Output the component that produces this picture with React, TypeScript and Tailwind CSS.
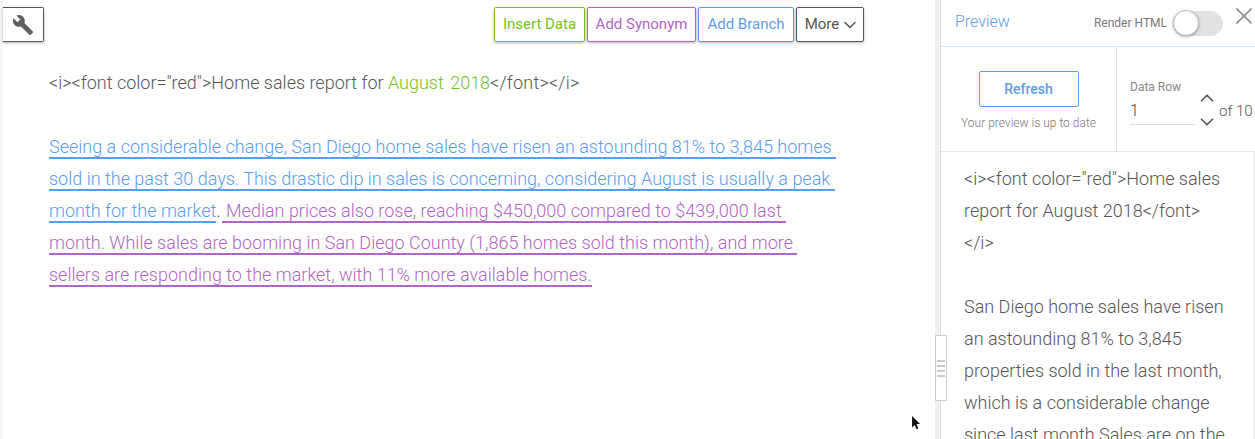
import { ChevronDown, ChevronUp, X } from "lucide-react";

const font = { fontFamily: "Roboto, sans-serif" };

const blueLines = [
  "Seeing a considerable change, San Diego home sales have risen an astounding 81% to 3,845 homes ",
  "sold in the past 30 days. This drastic dip in sales is concerning, considering August is usually a peak ",
];

const purpleLines = [
  "month. While sales are booming in San Diego County (1,865 homes sold this month), and more ",
  "sellers are responding to the market, with 11% more available homes.",
];

function ToolButton({ label, className }: { label: string; className: string }) {
  return (
    <button
      type="button"
      className={`flex h-[35px] items-center justify-center rounded-[2px] border bg-white text-[15px] font-normal shadow-[0_1px_3px_rgba(0,0,0,0.3)] ${className}`}
    >
      {label}
    </button>
  );
}

function Editor() {
  return (
    <main className="flex h-full w-[935px] shrink-0 flex-col border-l-[3px] border-[#f3f5f8] bg-white">
      <div className="flex h-[50px] shrink-0 items-start justify-between pt-[7px] pr-[71px]">
        <button
          type="button"
          className="flex h-[35px] w-[41px] items-center justify-center rounded-r-[2px] border border-l-0 border-[#555] bg-white shadow-[0_1px_3px_rgba(0,0,0,0.3)]"
        >
          <svg viewBox="0 0 24 24" className="h-[22px] w-[22px] fill-[#5f5f5f]">
            <path d="M22.7 19l-9.1-9.1c.9-2.3.4-5-1.5-6.9-2-2-5-2.4-7.4-1.3L9 6 6 9 1.6 4.7C.4 7.1.9 10.1 2.9 12.1c1.9 1.9 4.6 2.4 6.9 1.5l9.1 9.1c.4.4 1 .4 1.4 0l2.3-2.3c.5-.4.5-1.1.1-1.4z" />
          </svg>
        </button>
        <div className="flex gap-[2px]">
          <ToolButton label="Insert Data" className="w-[91px] border-[#74c225] text-[#74c225]" />
          <ToolButton label="Add Synonym" className="w-[109px] border-[#b265c4] text-[#b265c4]" />
          <ToolButton label="Add Branch" className="w-[96px] border-[#5b9ded] text-[#5b9ded]" />
          <button
            type="button"
            className="flex h-[35px] w-[68px] items-center justify-center gap-[1px] rounded-[2px] border border-[#555] bg-white pl-[5px] text-[15px] text-[#555] shadow-[0_1px_3px_rgba(0,0,0,0.3)]"
          >
            More
            <ChevronDown size={20} strokeWidth={1.8} />
          </button>
        </div>
      </div>

      <div className="pl-[46px] text-[18px] leading-[32px] font-light whitespace-pre text-[#555]">
        <p className="mt-[17px] mb-[32px]">
          {'<i><font color="red">Home sales report for '}
          <span className="text-[#74c225] [word-spacing:2px]">August 2018</span>
          <span className="tracking-[0.2px]">{"</font></i>"}</span>
        </p>
        {blueLines.map((line) => (
          <div key={line}>
            <span className="border-b-2 border-[#5b9ded] text-[#5b9ded]">{line}</span>
          </div>
        ))}
        <div>
          <span className="border-b-2 border-[#5b9ded] text-[#5b9ded]">month for the market</span>
          <span>.</span>
          <span className="ml-[1px] border-b-2 border-[#b265c4] text-[#b265c4]">
            {" Median prices also rose, reaching $450,000 compared to $439,000 last "}
          </span>
        </div>
        {purpleLines.map((line) => (
          <div key={line}>
            <span className="border-b-2 border-[#b265c4] text-[#b265c4]">{line}</span>
          </div>
        ))}
      </div>
    </main>
  );
}

function Preview() {
  return (
    <aside className="flex h-full min-w-0 flex-1 flex-col border-l-[5px] border-[#f1f1f1] bg-white">
      <div className="flex h-[47px] shrink-0 items-center border-b border-l border-b-[#d6e6f8] border-l-[#ddd] pl-[14px]">
        <span className="mb-[2px] text-[16px] font-light text-[#5b9ded]">Preview</span>
        <span className="ml-auto text-[12px] text-[#777]">Render HTML</span>
        <div className="ml-[6px] flex h-[25px] w-[50px] items-center rounded-full bg-[#e2e2e2]">
          <span className="h-[26px] w-[26px] rounded-full border border-[#bbb] bg-white shadow-[0_1px_3px_rgba(0,0,0,0.3)]" />
        </div>
        <X size={28} strokeWidth={1.5} className="mr-[-3px] mb-[14px] ml-[7px] text-[#888]" />
      </div>

      <div className="flex h-[105px] shrink-0 border-b border-l border-b-[#e4e4e4] border-l-[#ddd]">
        <div className="flex w-[176px] shrink-0 flex-col items-center border-r border-[#e4e4e4] pt-[24px]">
          <button
            type="button"
            className="h-[36px] w-[100px] rounded-[2px] border border-[#5b9ded] bg-white text-[14px] font-medium text-[#5b9ded]"
          >
            Refresh
          </button>
          <p className="mt-[9px] text-[12px] leading-[14px] font-light text-[#777]">Your preview is up to date</p>
        </div>
        <div className="flex min-w-0 flex-1 pt-[33px] pl-[13px]">
          <div className="w-[65px] shrink-0">
            <p className="text-[12px] leading-[14px] text-[#888]">Data Row</p>
            <p className="mt-[5px] h-[26px] border-b border-[#ddd] text-[16px] leading-[24px] font-light text-[#444]">1</p>
          </div>
          <div className="ml-[1px] flex w-[22px] shrink-0 flex-col items-center pt-[7px] text-[#555]">
            <ChevronUp size={22} strokeWidth={1.8} />
            <ChevronDown size={22} strokeWidth={1.8} className="mt-[2px]" />
          </div>
          <span className="mt-[19px] ml-[1px] text-[15px] leading-[24px] font-light whitespace-nowrap text-[#555]">of 10</span>
        </div>
      </div>

      <div className="min-h-0 flex-1 overflow-hidden border-r border-l border-r-[#ddd] border-l-[#ddd] pt-[11px] pl-[23px] text-[18px] leading-[32px] font-light whitespace-pre text-[#555]">
        <p>{'<i><font color="red">Home sales'}</p>
        <p>{"report for August 2018</font>"}</p>
        <p className="mb-[32px]">{"</i>"}</p>
        <p>San Diego home sales have risen</p>
        <p>an astounding 81% to 3,845</p>
        <p>properties sold in the last month,</p>
        <p>which is a considerable change</p>
        <p>since last month Sales are on the</p>
      </div>
    </aside>
  );
}

export default function App() {
  return (
    <div className="relative flex h-[439px] w-[1255px] overflow-hidden bg-white" style={font}>
      <Editor />
      <Preview />

      {/* drag handle between the two panes */}
      <div className="absolute top-[335px] left-[935px] flex h-[66px] w-[12px] flex-col items-center justify-center gap-[3px] border border-[#ccc] bg-white">
        <span className="h-[2px] w-[8px] bg-[#ccc]" />
        <span className="h-[2px] w-[8px] bg-[#ccc]" />
        <span className="h-[2px] w-[8px] bg-[#ccc]" />
        <span className="h-[2px] w-[8px] bg-[#ccc]" />
      </div>

      {/* mouse pointer */}
      <svg viewBox="0 0 12 18" className="absolute top-[416px] left-[911px] h-[16px] w-[11px]">
        <path d="M1 0v13l3-3 2 5 2-1-2-5h4z" fill="#111" />
      </svg>
    </div>
  );
}
